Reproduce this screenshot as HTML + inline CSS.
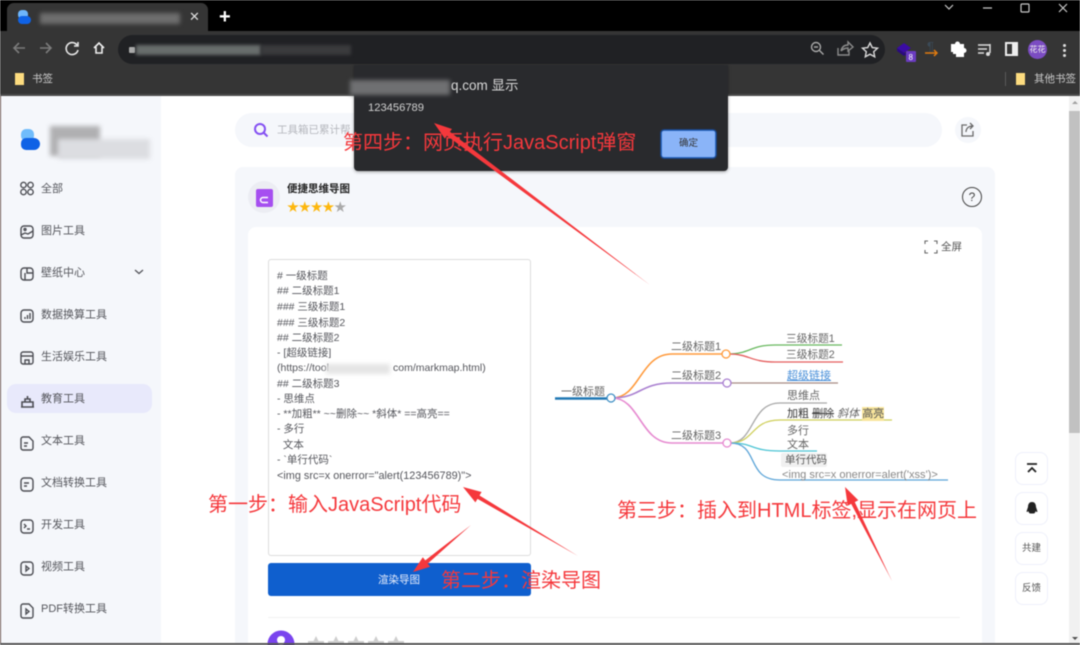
<!DOCTYPE html>
<html><head><meta charset="utf-8">
<style>
*{box-sizing:border-box}
html,body{margin:0;padding:0;width:1080px;height:645px;overflow:hidden;background:#fff}
body{position:relative;font-family:"Liberation Sans","Noto Sans CJK SC",sans-serif;filter:blur(.4px)}
div,span.a{position:absolute}
.t{white-space:nowrap;line-height:1}
.nav{left:41px;font-size:11px;color:#55565c}
.b{filter:blur(2.500px)}
.red{color:#f5383c;font-size:20px;white-space:nowrap;line-height:1}
.line{left:277px;font-size:10.500px;color:#55565c;white-space:nowrap;line-height:15px}
.side{left:1015px;width:33px;height:33px;border:1px solid #eef0fb;border-radius:8px;background:#fff;font-size:9.500px;color:#555;text-align:center;line-height:31px}
svg{position:absolute;overflow:visible}
</style></head>
<body>
<div style="left:0;top:0;width:1080px;height:31px;background:#000"></div>
<div style="left:7px;top:3px;width:201px;height:29px;background:#353535;border-radius:7px 7px 0 0"></div>
<div style="left:0;top:31px;width:1080px;height:65px;background:#353535"></div>
<div style="left:0;top:94px;width:1080px;height:2px;background:#4a4a4a"></div>
<!-- tab -->
<div style="left:18px;top:10px;width:10px;height:9px;background:#6db5fb;border-radius:4px"></div>
<div style="left:18px;top:16px;width:13px;height:8px;background:#0f62e6;border-radius:4px"></div>
<div class="b" style="left:40px;top:13px;width:140px;height:11px;background:#6e6e6e;filter:blur(2px)"></div>
<div class="t" style="left:189px;top:10px;font-size:13px;color:#ddd">✕</div>
<div class="t" style="left:219px;top:7px;font-size:20px;font-weight:bold;color:#fff">+</div>
<!-- window controls -->
<svg style="left:0;top:0" width="1080" height="31" fill="none" stroke="#c8c8c8" stroke-width="1.200">
<path d="M945 5l4 4 4-4M983 8h9"/><rect x="1021" y="4" width="8" height="8" rx="1"/><path d="M1059 4l8 8M1067 4l-8 8"/>
</svg>
<!-- toolbar -->
<svg style="left:0;top:29px" width="120" height="32" fill="none" stroke-width="1.600">
<path d="M25 19H14M19 14l-5 5 5 5M40 19h11M46 14l5 5-5 5" stroke="#7b7b7b"/>
<path d="M77 16a6 6 0 1 0 1 5M78 13v4h-4" stroke="#e6e6e6"/>
<path d="M94 19l5-5 5 5M96 18v6h6v-6" stroke="#eee"/>
</svg>
<div style="left:118px;top:35px;width:767px;height:29px;background:#202124;border-radius:15px"></div>
<div style="left:129px;top:47px;width:6px;height:6px;background:#aaa;border-radius:1px"></div>
<div class="b" style="left:136px;top:45px;width:125px;height:10px;background:#686d6c;filter:blur(1.500px)"></div>
<div class="b" style="left:261px;top:45px;width:90px;height:10px;background:#3a3b3d;filter:blur(1.500px)"></div>
<svg style="left:800px;top:36px" width="280" height="28" fill="none" stroke="#a8a8a8" stroke-width="1.400">
<circle cx="16" cy="11" r="4.500"/><path d="M19.500 14.500l4 4M14 11h4"/>
<path d="M38 12v7h11v-4M41 15c1-5 4-6 7-6V6l5 5-5 4v-3c-3 0-5 1-7 3" stroke="#8a8a8a"/>
<path d="M70 7l2.300 4.600 5.200.6-3.800 3.500 1 5.100-4.700-2.600-4.700 2.600 1-5.100-3.800-3.500 5.200-.6z" stroke="#d8d8d8"/>
</svg>
<!-- extensions -->
<svg style="left:890px;top:36px" width="190" height="28">
<path d="M14 7l7 5-7 5-7-5z" fill="#3a0ca3"/><path d="M7 12v3l7 5 3-2v-1l-3 0z" fill="#2a0a80"/>
<rect x="16" y="15" width="10" height="11" rx="1" fill="#6a3bc0"/>
<text x="18.500" y="24" font-size="8" fill="#fff" font-family="Liberation Sans">8</text>
<text x="37" y="15" font-size="13" fill="#3b4a57" font-family="Liberation Sans">¶</text>
<path d="M35 17h12M44 14l3 3-3 3" stroke="#e07b10" stroke-width="1.500" fill="none"/>
<path d="M61 10h4a2.500 2.500 0 0 1 5 0h4v4a2.500 2.500 0 0 1 0 5v4h-8v-3h-3v-2h-2z" fill="#fff" transform="translate(0,-2)"/>
<path d="M88 9h12M88 13h9M88 17h6M100 8v9" stroke="#ddd" stroke-width="1.500" fill="none"/><circle cx="98" cy="18" r="2" fill="#ddd"/>
<rect x="116" y="7" width="11" height="12" fill="none" stroke="#eee" stroke-width="2"/><rect x="122" y="7" width="5" height="12" fill="#eee"/>
</svg>
<div style="left:1028px;top:40px;width:19px;height:19px;border-radius:50%;background:#7b4cc2;color:#eee;font-size:8px;line-height:19px;text-align:center">花花</div>
<div style="left:1063px;top:44px;width:3px;height:3px;background:#ddd;border-radius:50%"></div>
<div style="left:1063px;top:49px;width:3px;height:3px;background:#ddd;border-radius:50%"></div>
<div style="left:1063px;top:54px;width:3px;height:3px;background:#ddd;border-radius:50%"></div>
<!-- bookmarks -->
<div style="left:15px;top:73px;width:9px;height:12px;background:#fddc7f"></div>
<div class="t" style="left:32px;top:74px;font-size:10.500px;color:#ccc">书签</div>
<div style="left:1005px;top:72px;width:1px;height:14px;background:#5a5a5a"></div>
<div style="left:1016px;top:73px;width:9px;height:12px;background:#fddc7f"></div>
<div class="t" style="left:1034px;top:74px;font-size:10.500px;color:#ccc">其他书签</div>

<!-- page -->
<div style="left:1px;top:96px;width:1068px;height:549px;background:#fff;border-radius:0 0 0 8px"></div>
<div style="left:0;top:96px;width:1px;height:549px;background:#6a5550"></div>
<div style="left:1px;top:96px;width:160px;height:549px;background:#f5f7fb"></div>
<div style="left:21px;top:129px;width:13px;height:12px;background:#70bcfb;border-radius:5px"></div>
<div style="left:21px;top:138px;width:19px;height:12px;background:#0f62e6;border-radius:5px 6px 6px 5px"></div>
<div class="b" style="left:50px;top:126px;width:50px;height:30px;background:#b0b0b2"></div>
<div class="b" style="left:58px;top:139px;width:92px;height:20px;background:#dcdde1"></div>
<div style="left:7px;top:384px;width:145px;height:29px;background:#e8e9fb;border-radius:9px"></div>
<svg style="left:20px;top:181px" width="16" height="440" fill="none" stroke="#4d4e54" stroke-width="1.400">
<circle cx="3.500" cy="4" r="2.700"/><circle cx="10.500" cy="4" r="2.700"/><circle cx="3.500" cy="11" r="2.700"/><circle cx="10.500" cy="11" r="2.700"/>
<rect x="1" y="45" width="12" height="12" rx="3"/><path d="M1 54l4-2 3 1 5-3"/><circle cx="5" cy="48.500" r="1"/>
<rect x="1" y="87" width="12" height="12" rx="3"/><path d="M7 87v5h6M5 92v7"/>
<rect x="1" y="129" width="12" height="12" rx="3"/><path d="M5 138v-2M7.500 138v-4M10 138v-6"/>
<rect x="1" y="171" width="12" height="12" rx="2"/><path d="M1 175h12M5 183v-4h4v4"/>
<path d="M1 226h13M2 226v-5h11v5M5 221v-3h5v3M7.500 218v-3" stroke-width="1.600"/>
<path d="M1 258a2 2 0 0 1 2-2h6l4 4v7a2 2 0 0 1-2 2H3a2 2 0 0 1-2-2zM4 262h4M4 265h3"/>
<rect x="1" y="297" width="12" height="13" rx="3"/><path d="M4 302h5M4 305h3"/>
<rect x="1" y="339" width="12" height="13" rx="3"/><path d="M4 343l2 2-2 2M7 348h3"/>
<rect x="1" y="381" width="12" height="13" rx="3"/><path d="M6 385l3 2.500-3 2.500z"/>
<path d="M1 425a2 2 0 0 1 2-2h6l4 4v8a2 2 0 0 1-2 2H3a2 2 0 0 1-2-2zM6 428l3 2.500-3 2.500z"/>
</svg>
<div class="t nav" style="top:184px">全部</div>
<div class="t nav" style="top:226px">图片工具</div>
<div class="t nav" style="top:268px">壁纸中心</div>
<svg style="left:134px;top:269px" width="10" height="6" fill="none" stroke="#55565c" stroke-width="1.300"><path d="M1 1l4 3.500L9 1"/></svg>
<div class="t nav" style="top:310px">数据换算工具</div>
<div class="t nav" style="top:352px">生活娱乐工具</div>
<div class="t nav" style="top:394px">教育工具</div>
<div class="t nav" style="top:436px">文本工具</div>
<div class="t nav" style="top:478px">文档转换工具</div>
<div class="t nav" style="top:520px">开发工具</div>
<div class="t nav" style="top:562px">视频工具</div>
<div class="t nav" style="top:604px">PDF转换工具</div>

<!-- search -->
<div style="left:235px;top:113px;width:707px;height:34px;background:#f5f7fb;border-radius:17px"></div>
<svg style="left:253px;top:122px" width="16" height="16" fill="none" stroke="#8450f2" stroke-width="2"><circle cx="7" cy="7" r="5"/><path d="M11 11l3.500 3.500"/></svg>
<div class="t" style="left:277px;top:125px;font-size:10.500px;color:#b5b7bd">工具箱已累计帮</div>
<div style="left:955px;top:117px;width:26px;height:26px;background:#f5f7fb;border-radius:50%"></div>
<svg style="left:960px;top:122px" width="16" height="16" fill="none" stroke="#6a6a6a" stroke-width="1.300"><path d="M7 3H2v11h11V9M6 10c0-4 3-6 7-6M10 1l3 3-3 3"/></svg>

<!-- card -->
<div style="left:235px;top:167px;width:760px;height:478px;background:#f5f7fb;border-radius:8px 8px 0 0"></div>
<div style="left:248px;top:181px;width:32px;height:32px;border-radius:50%;background:#ecedf3"></div>
<div style="left:256px;top:189px;width:17px;height:18px;background:#a64ff0;border-radius:2px"></div>
<svg style="left:258px;top:196px" width="12" height="8" fill="none" stroke="#fff" stroke-width="1.500"><path d="M10 1.500H5a2.500 2.500 0 0 0 0 5h5"/></svg>
<div class="t" style="left:287px;top:184px;font-size:10.500px;font-weight:bold;color:#222">便捷思维导图</div>
<div class="t" style="left:287px;top:201px;font-size:12px;letter-spacing:-.2px;color:#fdb70d">★★★★<span style="color:#aaa">★</span></div>
<div style="left:962px;top:187px;width:20px;height:20px;border:1.300px solid #444;border-radius:50%;font-size:12px;color:#444;text-align:center;line-height:18px">?</div>
<div style="left:248px;top:227px;width:734px;height:418px;background:#fff;border-radius:8px 8px 0 0"></div>
<svg style="left:925px;top:241px" width="12" height="12" fill="none" stroke="#666" stroke-width="1.100"><path d="M0 3V0h3M9 0h3v3M12 9v3H9M3 12H0V9"/></svg>
<div class="t" style="left:941px;top:242px;font-size:10.500px;color:#555">全屏</div>

<!-- textarea -->
<div style="left:268px;top:259px;width:263px;height:297px;border:1px solid #dcdcdc;border-radius:3px;background:#fff"></div>
<div class="line" style="top:269px"># 一级标题</div>
<div class="line" style="top:284px">## 二级标题1</div>
<div class="line" style="top:300px">### 三级标题1</div>
<div class="line" style="top:316px">### 三级标题2</div>
<div class="line" style="top:331px">## 二级标题2</div>
<div class="line" style="top:346px">- [超级链接]</div>
<div class="line" style="top:361px">(https://tool</div>
<div class="b" style="left:326px;top:364px;width:64px;height:10px;background:#e4e4e4"></div>
<div class="line" style="left:393px;top:361px">com/markmap.html)</div>
<div class="line" style="top:377px">## 二级标题3</div>
<div class="line" style="top:392px">- 思维点</div>
<div class="line" style="top:407px">- **加粗** ~~删除~~ *斜体* ==高亮==</div>
<div class="line" style="top:422px">- 多行</div>
<div class="line" style="top:438px">&nbsp; 文本</div>
<div class="line" style="top:453px">- `单行代码`</div>
<div class="line" style="top:469px;font-size:10.880px">&lt;img src=x onerror="alert(123456789)"&gt;</div>
<div style="left:268px;top:563px;width:263px;height:33px;background:#0f5fce;border-radius:3px"></div>
<div class="t" style="left:378px;top:575px;font-size:10.500px;color:#e8eefc">渲染导图</div>
<div style="left:268px;top:617px;width:692px;height:1px;background:#f2f2f2"></div>
<svg style="left:268px;top:630px" width="140" height="15">
<circle cx="13" cy="14" r="13.500" fill="#7a44ee"/><circle cx="13" cy="10" r="4" fill="#fff"/><path d="M6 22a7 7 0 0 1 14 0z" fill="#fff"/>
<g fill="#cfcfcf"><path d="M48 6l2.500 5H56v4H40v-4h5.500z"/><path d="M68 6l2.500 5H76v4H60v-4h5.500z"/><path d="M88 6l2.500 5H96v4H80v-4h5.500z"/><path d="M108 6l2.500 5H116v4h-16v-4h5.500z"/><path d="M128 6l2.500 5H136v4h-16v-4h5.500z"/></g>
</svg>

<!-- mindmap -->
<svg style="left:0;top:0" width="1080" height="645" fill="none" stroke-width="1.300">
<path d="M555 398.500H607" stroke="#1f77b4" stroke-width="2.500"/>
<path d="M612 398C640 398 640 354 672 354H723" stroke="#ff9a3c" stroke-width="1.600"/>
<path d="M612 398C640 398 640 383 672 383H724" stroke="#a97fd0" stroke-width="1.600"/>
<path d="M612 398C640 398 640 443 672 443H724" stroke="#e68ad0" stroke-width="1.600"/>
<path d="M728 354C750 354 750 345 775 345H842" stroke="#68b85e"/>
<path d="M728 354C750 354 750 362 775 362H843" stroke="#e55d5d"/>
<path d="M730 383H838" stroke="#a78a85"/>
<path d="M730 443C755 443 750 403 780 403H827" stroke="#a8a8a8"/>
<path d="M730 443C755 443 750 420 780 420H892" stroke="#cfcf5a"/>
<path d="M730 443C755 443 750 451 780 451H817" stroke="#4cc4d4"/>
<path d="M730 443C760 443 745 480 780 480H948" stroke="#5da5d8"/>
<circle cx="611" cy="398" r="4" fill="#fff" stroke="#3f8fc4" stroke-width="1.300"/>
<circle cx="726" cy="354" r="4" fill="#fff" stroke="#ff9a3c" stroke-width="1.300"/>
<circle cx="727" cy="383" r="4" fill="#fff" stroke="#a97fd0" stroke-width="1.300"/>
<circle cx="727" cy="443" r="4" fill="#fff" stroke="#e68ad0" stroke-width="1.300"/>
</svg>
<div style="left:862px;top:407px;width:22px;height:14px;background:#f8e59c"></div>
<div style="left:781px;top:453px;width:46px;height:14px;background:#f0f0f0;border-radius:2px"></div>
<div class="t" style="left:561px;top:387px;font-size:11px;color:#666">一级标题</div>
<div class="t" style="left:671px;top:342px;font-size:11px;color:#666">二级标题1</div>
<div class="t" style="left:671px;top:371px;font-size:11px;color:#666">二级标题2</div>
<div class="t" style="left:671px;top:431px;font-size:11px;color:#666">二级标题3</div>
<div class="t" style="left:786px;top:334px;font-size:10.700px;color:#666">三级标题1</div>
<div class="t" style="left:786px;top:350px;font-size:10.700px;color:#666">三级标题2</div>
<div class="t" style="left:787px;top:371px;font-size:11px;color:#4a90d9;text-decoration:underline">超级链接</div>
<div class="t" style="left:787px;top:391px;font-size:11px;color:#666">思维点</div>
<div class="t" style="left:787px;top:409px;font-size:11px;color:#333">加粗 <s style="color:#444">删除</s> <i style="color:#666">斜体</i> <span style="color:#555">高亮</span></div>
<div class="t" style="left:787px;top:426px;font-size:11px;color:#666">多行</div>
<div class="t" style="left:787px;top:440px;font-size:11px;color:#666">文本</div>
<div class="t" style="left:785px;top:455px;font-size:10.500px;color:#555">单行代码</div>
<div class="t" style="left:782px;top:470px;font-size:11.100px;color:#888">&lt;img src=x onerror=alert('xss')&gt;</div>

<!-- right side -->
<div class="side" style="top:452px"></div>
<svg style="left:1026px;top:463px" width="12" height="10" fill="none" stroke="#222" stroke-width="1.800"><path d="M1 1h10M2 9l4-4 4 4"/></svg>
<div class="side" style="top:492px"></div>
<svg style="left:1026px;top:502px" width="12" height="13"><path d="M6 0c3 0 4 2.500 4 5l1.500 4.500c-1 1-1.500 0-2-.5 0 1-.5 2-1.500 2.500H4c-1-.5-1.500-1.500-1.500-2.500-.5.500-1 1.500-2 .5L2 5c0-2.500 1-5 4-5z" fill="#222"/></svg>
<div class="side" style="top:532px">共建</div>
<div class="side" style="top:572px">反馈</div>
<div style="left:1069px;top:96px;width:11px;height:549px;background:#f1f1f1"></div>
<div style="left:1069px;top:111px;width:11px;height:322px;background:#c1c1c1"></div>
<svg style="left:1071px;top:100px" width="8" height="6"><path d="M4 1l3 3H1z" fill="#a0a0a0"/></svg>
<svg style="left:1071px;top:635px" width="8" height="6"><path d="M4 5L1 2h6z" fill="#505050"/></svg>
<div style="left:0;top:643px;width:1080px;height:2px;background:#555"></div>

<!-- dialog -->
<div style="left:354px;top:65px;width:374px;height:106px;background:#292a2d;border-radius:0 0 4px 4px;box-shadow:0 1px 3px rgba(0,0,0,.35)"></div>
<div class="b" style="left:350px;top:80px;width:100px;height:15px;background:#6f7072;filter:blur(2px)"></div>
<div class="t" style="left:451px;top:79px;font-size:13.500px;color:#d8d8d8">q.com 显示</div>
<div class="t" style="left:368px;top:103px;font-size:11.200px;color:#d0d0d0">123456789</div>
<div style="left:661px;top:130px;width:55px;height:28px;background:#8ab4f8;border:1.500px solid #2d6bc7;outline:1px solid #1b3f78;border-radius:3px;color:#333;font-size:9.500px;line-height:26px;text-align:center">确定</div>

<!-- annotations -->
<svg style="left:0;top:0" width="1080" height="645" fill="#f5383c">
<path d="M650 285L449.900 131.800 452 129 434 123 444.800 138.600 446.900 135.800Z"/>
<path d="M578 556L479.500 495.500 481.600 492 463 487 475.400 502.400 477.500 498.900Z"/>
<path d="M471 525L427.700 563.600 430.200 566.700 413 572 422.800 557.300 425.300 560.400Z"/>
<path d="M892 581L854.800 502.100 858.300 500.300 845 487 847.700 505.700 851.200 503.900Z"/>
</svg>
<div class="red" style="left:343px;top:133px">第四步：网页执行JavaScript弹窗</div>
<div class="red" style="left:208px;top:495px">第一步：输入JavaScript代码</div>
<div class="red" style="left:441px;top:571px">第二步：渲染导图</div>
<div class="red" style="left:617px;top:501px">第三步：插入到HTML标签,显示在网页上</div>
</body></html>
